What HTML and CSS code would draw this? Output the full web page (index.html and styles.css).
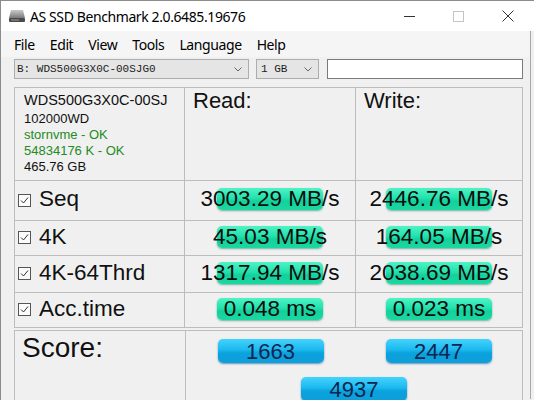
FILE: index.html
```html
<!DOCTYPE html>
<html lang="en">
<head>
    <meta charset="UTF-8">
    <title>AS SSD Benchmark</title>
    <link rel="stylesheet" href="styles.css">
</head>
<body>
    <div class="window">
        <header class="titlebar">
            <svg class="app-icon" viewBox="0 0 18 14" width="18" height="14">
                <defs>
                    <linearGradient id="hd" x1="0" y1="0" x2="0" y2="1">
                        <stop offset="0" stop-color="#c9c9c9"/>
                        <stop offset="1" stop-color="#7a7a7a"/>
                    </linearGradient>
                </defs>
                <path d="M3 1 H15 L17 9 H1 Z" fill="url(#hd)"/>
                <rect x="1" y="9" width="16" height="4" rx="1" fill="#4a4a4a"/>
                <rect x="3" y="10.5" width="8" height="1" fill="#9a9a9a"/>
            </svg>
            <span class="title">AS SSD Benchmark 2.0.6485.19676</span>
            <div class="controls">
                <span class="ctl min"><svg width="11" height="11" viewBox="0 0 11 11"><path d="M0 5.5 H11" stroke="#333" stroke-width="1"/></svg></span>
                <span class="ctl max"><svg width="11" height="11" viewBox="0 0 11 11"><rect x="0.5" y="0.5" width="10" height="10" fill="none" stroke="#c4c4c4"/></svg></span>
                <span class="ctl close"><svg width="12" height="12" viewBox="0 0 12 12"><path d="M0.5 0.5 L11.5 11.5 M11.5 0.5 L0.5 11.5" stroke="#333" stroke-width="1"/></svg></span>
            </div>
        </header>

        <div class="client">
            <nav class="menubar">
                <span>File</span>
                <span>Edit</span>
                <span>View</span>
                <span>Tools</span>
                <span>Language</span>
                <span>Help</span>
            </nav>

            <div class="toolbar">
                <div class="combo drive">
                    <span>B: WDS500G3X0C-00SJG0</span>
                    <svg width="8" height="5" viewBox="0 0 8 5"><path d="M0.5 0.5 L4 4 L7.5 0.5" fill="none" stroke="#666"/></svg>
                </div>
                <div class="combo size">
                    <span>1 GB</span>
                    <svg width="8" height="5" viewBox="0 0 8 5"><path d="M0.5 0.5 L4 4 L7.5 0.5" fill="none" stroke="#666"/></svg>
                </div>
                <input class="path" type="text">
            </div>

            <div class="results">
                <div class="cell info">
                    <div class="model">WDS500G3X0C-00SJ</div>
                    <div class="line first">102000WD</div>
                    <div class="line ok">stornvme - OK</div>
                    <div class="line ok">54834176 K - OK</div>
                    <div class="line">465.76 GB</div>
                </div>
                <div class="cell head">Read:</div>
                <div class="cell head">Write:</div>

                <div class="cell test">
                    <svg class="chk" width="13" height="13" viewBox="0 0 13 13"><rect x="0.5" y="0.5" width="12" height="12" fill="#fbfbfb" stroke="#555"/><path d="M3 6.5 L5.5 9 L10 3.5" fill="none" stroke="#333"/></svg>
                    <span>Seq</span>
                </div>
                <div class="cell val"><span class="bar"></span><span class="num">3003.29 MB/s</span></div>
                <div class="cell val"><span class="bar"></span><span class="num">2446.76 MB/s</span></div>

                <div class="cell test">
                    <svg class="chk" width="13" height="13" viewBox="0 0 13 13"><rect x="0.5" y="0.5" width="12" height="12" fill="#fbfbfb" stroke="#555"/><path d="M3 6.5 L5.5 9 L10 3.5" fill="none" stroke="#333"/></svg>
                    <span>4K</span>
                </div>
                <div class="cell val"><span class="bar"></span><span class="num">45.03 MB/s</span></div>
                <div class="cell val"><span class="bar"></span><span class="num">164.05 MB/s</span></div>

                <div class="cell test">
                    <svg class="chk" width="13" height="13" viewBox="0 0 13 13"><rect x="0.5" y="0.5" width="12" height="12" fill="#fbfbfb" stroke="#555"/><path d="M3 6.5 L5.5 9 L10 3.5" fill="none" stroke="#333"/></svg>
                    <span>4K-64Thrd</span>
                </div>
                <div class="cell val"><span class="bar"></span><span class="num">1317.94 MB/s</span></div>
                <div class="cell val"><span class="bar"></span><span class="num">2038.69 MB/s</span></div>

                <div class="cell test">
                    <svg class="chk" width="13" height="13" viewBox="0 0 13 13"><rect x="0.5" y="0.5" width="12" height="12" fill="#fbfbfb" stroke="#555"/><path d="M3 6.5 L5.5 9 L10 3.5" fill="none" stroke="#333"/></svg>
                    <span>Acc.time</span>
                </div>
                <div class="cell val"><span class="bar"></span><span class="num">0.048 ms</span></div>
                <div class="cell val"><span class="bar"></span><span class="num">0.023 ms</span></div>
            </div>

            <div class="score">
                <div class="cell score-label">Score:</div>
                <div class="cell score-vals">
                    <span class="pill">1663</span>
                    <span class="pill">2447</span>
                    <span class="pill total">4937</span>
                </div>
            </div>
        </div>
    </div>
</body>
</html>
```

FILE: styles.css
```css
body {
    margin: 0;
    width: 534px;
    height: 400px;
    overflow: hidden;
    background: #f0f0f0;
    font-family: 'Liberation Sans', Arial, sans-serif;
    color: #111;
}

.window {
    border-top: 1px solid #8c8c8c;
    border-left: 1px solid #8c8c8c;
    height: 399px;
}

.titlebar {
    height: 30px;
    background: #fff;
    display: flex;
    align-items: center;
}

.app-icon {
    margin-left: 7px;
}

.title {
    margin-left: 4px;
    font-family: 'Noto Sans', sans-serif;
    font-size: 14px;
    letter-spacing: -0.4px;
    color: #000;
}

.controls {
    margin-left: auto;
    display: flex;
    padding-right: 1px;
}

.ctl {
    width: 50px;
    height: 30px;
    display: flex;
    align-items: center;
    justify-content: center;
}

.ctl.min {
    width: 48px;
}

.client {
    width: 529px;
    height: 368px;
    border-right: 1px solid #a8a8a8;
}

.menubar {
    height: 26px;
    background: #f5f5f5;
    display: flex;
    align-items: center;
    gap: 15px;
    padding-left: 13px;
    font-family: 'Noto Sans', sans-serif;
    font-size: 14px;
    letter-spacing: -0.4px;
    color: #000;
}

.toolbar {
    display: flex;
    margin: 2px 0 0 13px;
    height: 20px;
}

.combo {
    box-sizing: border-box;
    height: 20px;
    border: 1px solid #adadad;
    background: #e5e5e5;
    display: flex;
    align-items: center;
    justify-content: space-between;
    padding: 0 6px 0 2px;
    font-family: 'Liberation Mono', monospace;
    font-size: 11px;
    color: #222;
}

.combo.drive {
    width: 235px;
}

.combo.size {
    width: 63px;
    margin-left: 7px;
    padding-left: 4px;
}

.path {
    box-sizing: border-box;
    width: 196px;
    height: 20px;
    margin: 0 0 0 8px;
    border: 1px solid #7a7a7a;
    background: #fff;
    padding: 0;
}

.results {
    margin: 8px 0 0 13px;
    display: grid;
    grid-template-columns: 169px 170px 166px;
    grid-template-rows: 92px 39px 34px 36px 34px;
    gap: 1px;
    padding: 1px;
    width: fit-content;
    background: #bdbdbd;
}

.cell {
    background: #f0f0f0;
}

.info {
    padding: 4px 0 0 9px;
}

.model {
    font-size: 14.5px;
    line-height: 17px;
}

.line {
    font-size: 13px;
    line-height: 16px;
}

.line.first {
    margin-top: 2px;
}

.line.ok {
    color: #238b23;
}

.head {
    padding-left: 8px;
    font-size: 22px;
    line-height: 26px;
}

.test {
    display: flex;
    align-items: center;
    gap: 8px;
    padding: 0 0 3px 3px;
    font-size: 22.5px;
}

.chk {
    flex: none;
    margin-top: 2px;
}

.val {
    display: grid;
    place-items: center;
    padding-bottom: 3px;
}

.val > * {
    grid-area: 1 / 1;
}

.bar {
    width: 106px;
    height: 22px;
    border-radius: 5px;
    background: linear-gradient(to bottom, #4ff3c6 0%, #22e2ad 45%, #14d19c 60%, #1bd8a3 100%);
    box-shadow: 0 1px 2px rgba(0, 130, 90, 0.55);
}

.num {
    position: relative;
    font-size: 22.5px;
    color: #0d0d0d;
    white-space: nowrap;
}

.score {
    margin: 2px 0 0 13px;
    display: grid;
    grid-template-columns: 170px 336px;
    gap: 1px;
    padding: 1px;
    width: fit-content;
    height: 80px;
    background: #bdbdbd;
}

.score-label {
    padding: 1px 0 0 7px;
    font-size: 28px;
    line-height: 32px;
}

.score-vals {
    display: grid;
    grid-template-columns: 169px 167px;
    align-content: start;
    justify-items: center;
    row-gap: 14px;
    padding-top: 8px;
}

.pill {
    width: 106px;
    height: 24px;
    border-radius: 5px;
    background: linear-gradient(to bottom, #43d3fc 0%, #1cb9f0 45%, #0ba2de 58%, #0e9fd9 100%);
    box-shadow: 0 1px 2px rgba(0, 70, 130, 0.55);
    font-size: 22px;
    line-height: 25px;
    text-align: center;
    color: #0f2650;
}

.pill.total {
    grid-column: 1 / 3;
}
```
